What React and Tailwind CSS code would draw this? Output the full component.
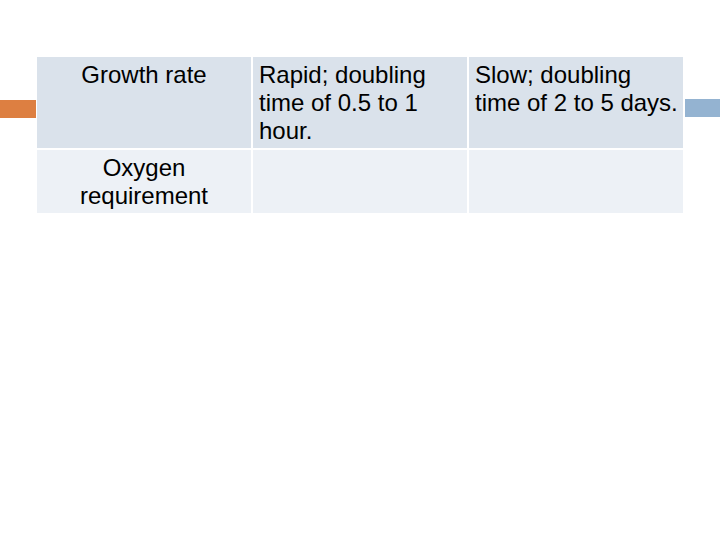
import React from "react";

const rows = [
  {
    label: ["Growth rate"],
    a: ["Rapid; doubling", "time of 0.5 to 1", "hour."],
    b: ["Slow; doubling", "time of 2 to 5 days."],
    bg: "bg-[#dae2eb]",
    h: "h-[91px]",
  },
  {
    label: ["Oxygen", "requirement"],
    a: [],
    b: [],
    bg: "bg-[#edf1f6]",
    h: "h-[63px]",
  },
];

function Lines({ lines }) {
  return lines.map((l, i) => (
    <div key={i} className="whitespace-nowrap">{l}</div>
  ));
}

export default function App() {
  return (
    <div
      className="w-[720px] h-[540px] bg-white pt-[57px] text-black text-[24px] leading-[28px]"
      style={{ fontFamily: '"Liberation Sans", Arial, sans-serif' }}
    >
      <div className="flex">
        <div className="w-[36px] pt-[43px]">
          <div className="h-[18px] bg-[#dd7f41]" />
        </div>
        <div className="ml-px grid grid-cols-[214px_214px_214px] gap-[2px] w-[646px]">
          {rows.map((r, i) => (
            <React.Fragment key={i}>
              <div className={`${r.bg} ${r.h} pt-[4px] text-center`}>
                <Lines lines={r.label} />
              </div>
              <div className={`${r.bg} ${r.h} pt-[4px] pl-[6px]`}>
                <Lines lines={r.a} />
              </div>
              <div className={`${r.bg} ${r.h} pt-[4px] pl-[6px]`}>
                <Lines lines={r.b} />
              </div>
            </React.Fragment>
          ))}
        </div>
        <div className="flex-1 ml-[2px] pt-[42px]">
          <div className="h-[18px] bg-[#94b3d1]" />
        </div>
      </div>
    </div>
  );
}
